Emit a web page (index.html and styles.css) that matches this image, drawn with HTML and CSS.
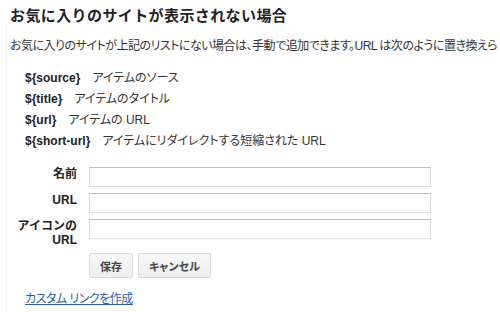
FILE: index.html
```html
<!DOCTYPE html>
<html lang="ja">
<head>
<meta charset="utf-8">
<link rel="stylesheet" href="styles.css">
</head>
<body>
<h3 class="title">お気に入りのサイトが表示されない場合</h3>
<div class="section">
  <p class="intro">お気に入りのサイトが上記のリストにない場合は、手動で追加できます。URL は次のように置き換えら</p>
  <ul class="vars">
    <li><b class="var">${source}</b><span>アイテムのソース</span></li>
    <li><b class="var">${title}</b><span>アイテムのタイトル</span></li>
    <li><b class="var">${url}</b><span>アイテムの URL</span></li>
    <li><b class="var">${short-url}</b><span>アイテムにリダイレクトする短縮された URL</span></li>
  </ul>
  <form class="form">
    <label class="lbl" for="f1">名前</label>
    <input class="field" id="f1" type="text">
    <label class="lbl" for="f2">URL</label>
    <input class="field" id="f2" type="text">
    <label class="lbl" for="f3">アイコンの URL</label>
    <input class="field" id="f3" type="text">
    <div class="buttons">
      <button class="btn" type="button">保存</button>
      <button class="btn" type="button">キャンセル</button>
    </div>
  </form>
  <a class="link" href="#">カスタム リンクを作成</a>
</div>
</body>
</html>
```
FILE: styles.css
```css
html, body {
  margin: 0;
  padding: 0;
  background: #fff;
  overflow: hidden;
}
body {
  width: 500px;
  height: 312px;
  font-family: "Liberation Sans", Arial, "Noto Sans CJK JP", sans-serif;
  font-size: 12px;
  color: #333;
  font-feature-settings: "palt";
}
.title {
  margin: 0;
  padding: 7px 0 0 10px;
  font-size: 15px;
  line-height: 18px;
  font-weight: bold;
  color: #222;
  font-feature-settings: normal;
  letter-spacing: 0.4px;
}
.section {
  margin-left: 6px;
  border-left: 1px solid #efefef;
  padding-left: 3px;
  padding-top: 13px;
  padding-bottom: 20px;
}
.intro {
  margin: 0;
  line-height: 16px;
  white-space: nowrap;
  letter-spacing: -0.5px;
}
.vars {
  list-style: none;
  margin: 14px 0 0 0;
  padding: 0 0 0 15px;
}
.vars li {
  line-height: 21px;
  white-space: nowrap;
}
.var {
  color: #222;
  margin-right: 12px;
}
.form {
  display: grid;
  grid-template-columns: 67px 342px;
  column-gap: 12px;
  row-gap: 6px;
  margin-top: 15px;
}
.lbl {
  align-self: start;
  text-align: right;
  font-weight: bold;
  line-height: 14px;
  color: #222;
  font-feature-settings: normal;
}
.field {
  box-sizing: border-box;
  height: 20px;
  margin: 0;
  border: 1px solid #dcdcdc;
  border-top-color: #c0c0c0;
  border-radius: 1px;
  background: #fff;
  font: inherit;
}
.buttons {
  grid-column: 2;
  display: flex;
  gap: 5px;
}
.btn {
  box-sizing: border-box;
  height: 25px;
  padding: 0 10px;
  border: 1px solid #dadada;
  border-radius: 2px;
  background: linear-gradient(#f7f7f7, #efefef);
  font-family: inherit;
  font-size: 11px;
  font-weight: bold;
  color: #444;
  font-feature-settings: "palt";
}
.link {
  display: inline-block;
  margin: 13px 0 0 15px;
  color: #2a5db0;
  text-decoration: underline;
  line-height: 16px;
  letter-spacing: -0.5px;
}
```
